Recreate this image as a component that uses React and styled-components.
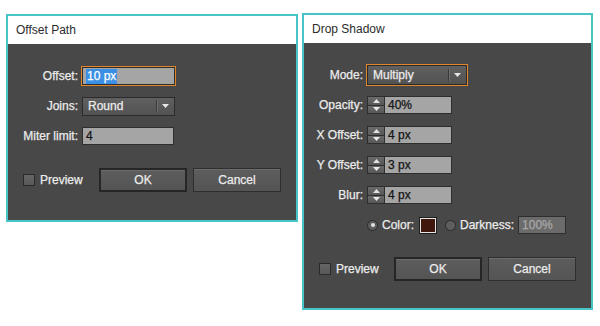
import styled, { createGlobalStyle } from "styled-components";

const Global = createGlobalStyle`
  body {
    margin: 0;
    background: #ffffff;
    font-family: "Liberation Sans", Arial, sans-serif;
    font-size: 12px;
  }
`;

const Page = styled.div`
  display: flex;
  align-items: flex-start;
  gap: 4px;
  padding: 13px 0 0 6px;
`;

const Dialog = styled.div`
  width: ${(p) => p.$w}px;
  margin-top: ${(p) => p.$top || 0}px;
  border: 2px solid #48c3c6;
  box-sizing: border-box;
  background: #484848;
`;

const TitleBar = styled.div`
  height: 28px;
  display: flex;
  align-items: center;
  padding-left: 8px;
  background: #ffffff;
  color: #2b2b2b;
  font-size: 12px;
`;

const Body = styled.div`
  padding: 22px 0 ${(p) => p.$bottom}px;
  display: flex;
  flex-direction: column;
  gap: 10px;
  -webkit-text-stroke: 0.25px currentColor;
`;

const Row = styled.div`
  height: 20px;
  display: flex;
  align-items: center;
  gap: 4px;
`;

const Label = styled.div`
  width: ${(p) => p.$w}px;
  text-align: right;
  color: #ececec;
  white-space: nowrap;
`;

const Input = styled.div`
  width: ${(p) => p.$w}px;
  height: 18px;
  box-sizing: border-box;
  border: 1px solid #2e2e2e;
  background: ${(p) => (p.$disabled ? "#6b6b6b" : "#a5a5a5")};
  color: ${(p) => (p.$disabled ? "#a8a8a8" : "#141414")};
  padding-left: 3px;
  display: flex;
  align-items: center;
  ${(p) => p.$focus && "box-shadow: 0 0 0 1px #e0862c;"}
`;

const Selected = styled.span`
  background: #3b8fe4;
  color: #ffffff;
  padding: 0 1px;
  line-height: 15px;
`;

const Select = styled.div`
  width: ${(p) => p.$w}px;
  height: ${(p) => p.$h}px;
  box-sizing: border-box;
  border: 1px solid #2b2b2b;
  background: linear-gradient(#606060, #525252);
  color: #ececec;
  display: flex;
  align-items: center;
  ${(p) => p.$focus && "box-shadow: 0 0 0 1px #e0862c;"}
`;

const SelectText = styled.div`
  flex: 1;
  padding-left: 5px;
`;

const SelectArrow = styled.div`
  width: 17px;
  height: 12px;
  border-left: 1px solid #3a3a3a;
  box-shadow: inset 1px 0 0 #6e6e6e;
  display: flex;
  align-items: center;
  justify-content: center;
`;

const Spin = styled.div`
  display: flex;
`;

const SpinBox = styled.div`
  width: 17px;
  height: 18px;
  box-sizing: border-box;
  border: 1px solid #2e2e2e;
  border-right: none;
  display: flex;
  flex-direction: column;
`;

const SpinHalf = styled.div`
  flex: 1;
  display: flex;
  align-items: center;
  justify-content: center;
  background: linear-gradient(#6a6a6a, #575757);
  & + & {
    border-top: 1px solid #2e2e2e;
  }
`;

const Footer = styled.div`
  margin-top: 12px;
  padding: 0 15px;
  display: flex;
  align-items: center;
`;

const Check = styled.div`
  width: 12px;
  height: 12px;
  box-sizing: border-box;
  border: 1px solid #2a2a2a;
  background: linear-gradient(#666, #585858);
  margin-right: 5px;
`;

const CheckText = styled.span`
  color: #ececec;
  margin-right: auto;
`;

const Button = styled.div`
  width: 88px;
  height: 24px;
  box-sizing: border-box;
  border: ${(p) => (p.$default ? "2px solid #262626" : "1px solid #2e2e2e")};
  background: linear-gradient(#5d5d5d, #545454);
  box-shadow: inset 0 1px 0 #6c6c6c;
  color: #ececec;
  display: flex;
  align-items: center;
  justify-content: center;
  & + & {
    margin-left: 6px;
  }
`;

const Radio = styled.div`
  width: 11px;
  height: 11px;
  border-radius: 50%;
  box-sizing: border-box;
  border: 1px solid #2a2a2a;
  background: #5e5e5e;
  display: flex;
  align-items: center;
  justify-content: center;
  margin-left: ${(p) => p.$ml || 0}px;
  &::after {
    content: "";
    width: 4px;
    height: 4px;
    border-radius: 50%;
    background: ${(p) => (p.$on ? "#e2e2e2" : "transparent")};
  }
`;

const Swatch = styled.div`
  width: 18px;
  height: 17px;
  box-sizing: border-box;
  border: 1px solid #1e1e1e;
  box-shadow: inset 0 0 0 1px #e6e6e6;
  background: #3f170c;
  margin-left: 1px;
`;

const Text = styled.span`
  color: #ececec;
`;

const Down = () => (
  <svg width="7" height="4" viewBox="0 0 7 4">
    <path d="M0 0h7L3.5 4z" fill="#e8e8e8" />
  </svg>
);

const Up = () => (
  <svg width="7" height="4" viewBox="0 0 7 4">
    <path d="M0 4h7L3.5 0z" fill="#e0e0e0" />
  </svg>
);

function Spinner({ value }) {
  return (
    <Spin>
      <SpinBox>
        <SpinHalf>
          <Up />
        </SpinHalf>
        <SpinHalf>
          <Down />
        </SpinHalf>
      </SpinBox>
      <Input $w={68}>{value}</Input>
    </Spin>
  );
}

function Buttons() {
  return (
    <Footer>
      <Check />
      <CheckText>Preview</CheckText>
      <Button $default>OK</Button>
      <Button>Cancel</Button>
    </Footer>
  );
}

export default function App() {
  return (
    <>
      <Global />
      <Page>
        {/* offset path */}
        <Dialog $w={292} $top={1}>
          <TitleBar>Offset Path</TitleBar>
          <Body $bottom={28}>
            <Row>
              <Label $w={70}>Offset:</Label>
              <Input $w={93} $focus>
                <Selected>10 px</Selected>
              </Input>
            </Row>
            <Row>
              <Label $w={70}>Joins:</Label>
              <Select $w={93} $h={19}>
                <SelectText>Round</SelectText>
                <SelectArrow>
                  <Down />
                </SelectArrow>
              </Select>
            </Row>
            <Row>
              <Label $w={70}>Miter limit:</Label>
              <Input $w={92}>4</Input>
            </Row>
            <Buttons />
          </Body>
        </Dialog>

        {/* drop shadow */}
        <Dialog $w={291}>
          <TitleBar>Drop Shadow</TitleBar>
          <Body $bottom={27}>
            <Row>
              <Label $w={59}>Mode:</Label>
              <Select $w={100} $h={20} $focus>
                <SelectText>Multiply</SelectText>
                <SelectArrow>
                  <Down />
                </SelectArrow>
              </Select>
            </Row>
            <Row>
              <Label $w={59}>Opacity:</Label>
              <Spinner value="40%" />
            </Row>
            <Row>
              <Label $w={59}>X Offset:</Label>
              <Spinner value="4 px" />
            </Row>
            <Row>
              <Label $w={59}>Y Offset:</Label>
              <Spinner value="3 px" />
            </Row>
            <Row>
              <Label $w={59}>Blur:</Label>
              <Spinner value="4 px" />
            </Row>
            <Row>
              <Label $w={59} />
              <Radio $on />
              <Text>Color:</Text>
              <Swatch />
              <Radio $ml={4} />
              <Text>Darkness:</Text>
              <Input $w={48} $disabled>
                100%
              </Input>
            </Row>
            <Buttons />
          </Body>
        </Dialog>
      </Page>
    </>
  );
}
